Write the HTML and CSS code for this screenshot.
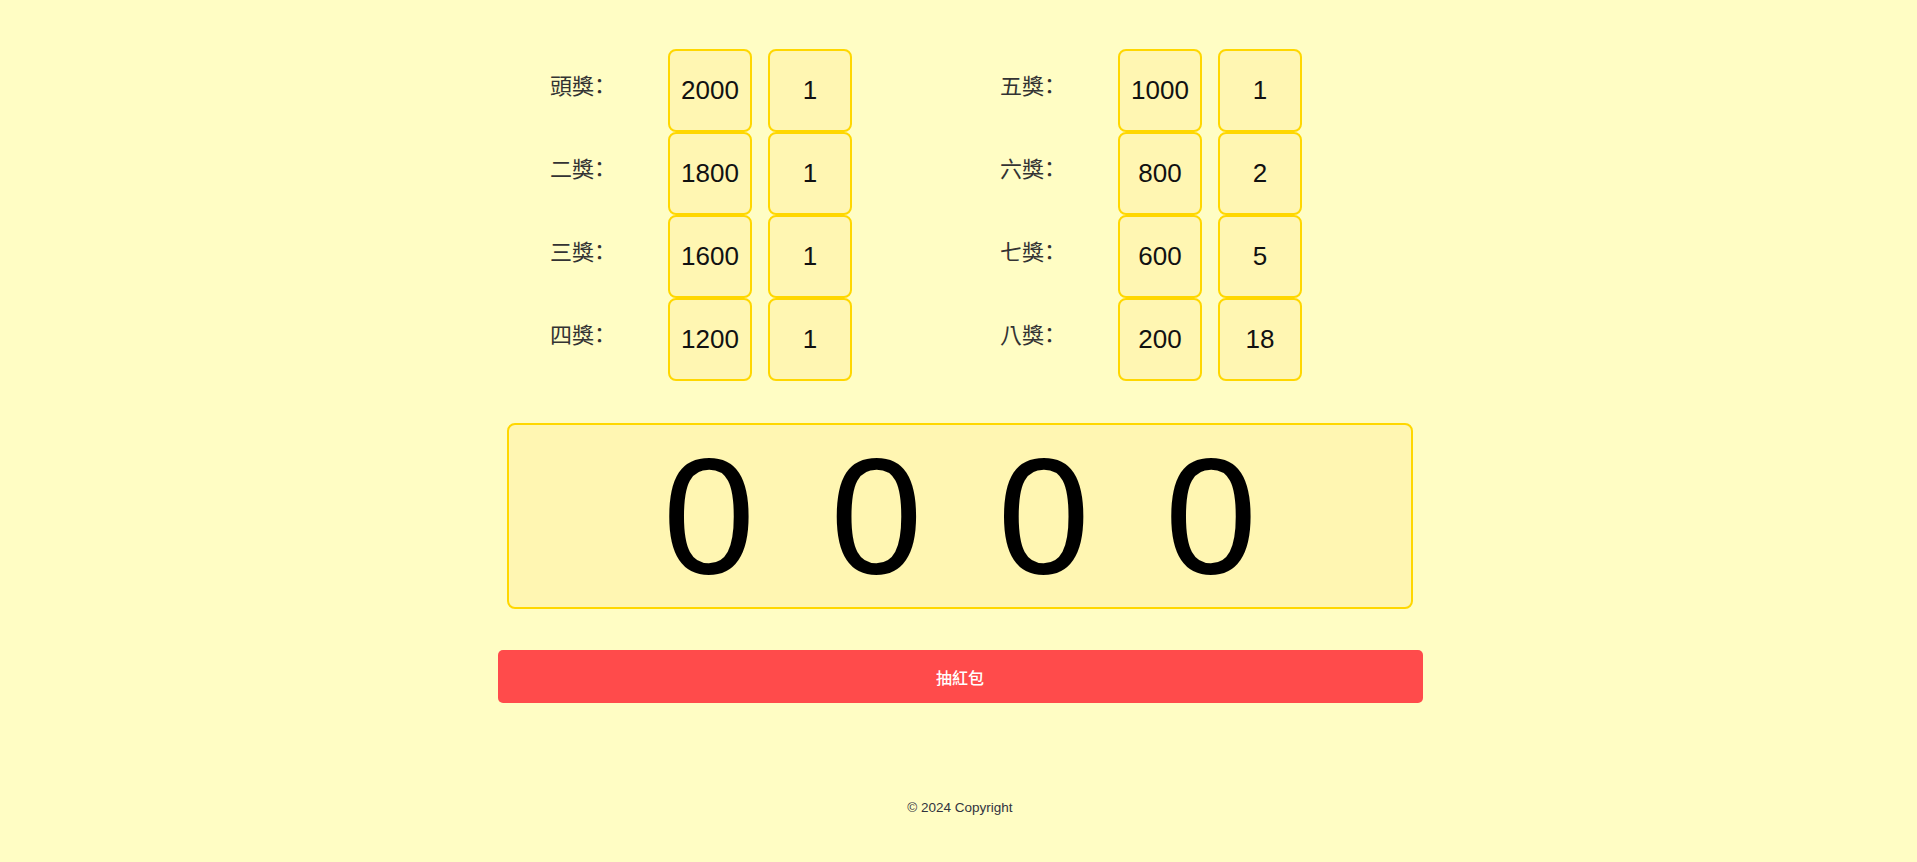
FILE: index.html
```html
<!DOCTYPE html>
<html lang="zh-Hant">
<head>
<meta charset="utf-8">
<title>抽紅包</title>
<link rel="stylesheet" href="styles.css">
</head>
<body>
<main class="page">
  <section class="prizes">
    <div class="group">
      <div class="row"><span class="label">頭獎：</span><span class="cell">2000</span><span class="cell">1</span></div>
      <div class="row"><span class="label">二獎：</span><span class="cell">1800</span><span class="cell">1</span></div>
      <div class="row"><span class="label">三獎：</span><span class="cell">1600</span><span class="cell">1</span></div>
      <div class="row"><span class="label">四獎：</span><span class="cell">1200</span><span class="cell">1</span></div>
    </div>
    <div class="group">
      <div class="row"><span class="label">五獎：</span><span class="cell">1000</span><span class="cell">1</span></div>
      <div class="row"><span class="label">六獎：</span><span class="cell">800</span><span class="cell">2</span></div>
      <div class="row"><span class="label">七獎：</span><span class="cell">600</span><span class="cell">5</span></div>
      <div class="row"><span class="label">八獎：</span><span class="cell">200</span><span class="cell">18</span></div>
    </div>
  </section>

  <section class="display">
    <span class="digit">0</span>
    <span class="digit">0</span>
    <span class="digit">0</span>
    <span class="digit">0</span>
  </section>

  <button class="draw" type="button">抽紅包</button>

  <footer class="footer">© 2024 Copyright</footer>
</main>
</body>
</html>
```

FILE: styles.css
```css
html, body {
  margin: 0;
  padding: 0;
  background: #fffdc4;
}

body {
  font-family: "Liberation Sans", "Noto Sans CJK TC", Arial, sans-serif;
  color: #31333f;
}

.page {
  display: flex;
  flex-direction: column;
  align-items: center;
  padding: 49px 0 40px 3px;
}

.prizes {
  width: 906px;
  box-sizing: border-box;
  padding-left: 43px;
  display: flex;
  gap: 148px;
}

.group {
  display: flex;
  flex-direction: column;
}

.row {
  display: flex;
  align-items: center;
  height: 83px;
}

.label {
  width: 118px;
  font-family: "Noto Sans CJK TC", "Liberation Sans", sans-serif;
  font-size: 22px;
  font-feature-settings: "halt";
  color: #333333;
  margin-bottom: 14px;
}

.cell {
  box-sizing: border-box;
  width: 84px;
  height: 83px;
  border: 2px solid #ffd700;
  border-radius: 8px;
  background: #fff6b2;
  display: flex;
  align-items: center;
  justify-content: center;
  font-family: "Liberation Sans", Arial, sans-serif;
  font-size: 26px;
  color: #111111;
}

.cell + .cell {
  margin-left: 16px;
}

.display {
  box-sizing: border-box;
  margin-top: 42px;
  width: 906px;
  height: 186px;
  border: 2px solid #ffd700;
  border-radius: 8px;
  background: #fff6b2;
  display: flex;
  align-items: center;
  justify-content: center;
  gap: 75px;
}

.digit {
  font-family: "Liberation Sans", Arial, sans-serif;
  font-size: 166px;
  line-height: 1.15;
  color: #000000;
}

.draw {
  margin-top: 41px;
  width: 925px;
  height: 53px;
  border: none;
  border-radius: 5px;
  background: #ff4b4b;
  color: #ffffff;
  font-family: "Noto Sans CJK TC", "Liberation Sans", sans-serif;
  font-size: 16px;
  font-weight: 500;
  cursor: pointer;
}

.footer {
  margin-top: 97px;
  font-family: "Liberation Sans", Arial, sans-serif;
  font-size: 13.5px;
  line-height: 16px;
  color: #31333f;
}
```
